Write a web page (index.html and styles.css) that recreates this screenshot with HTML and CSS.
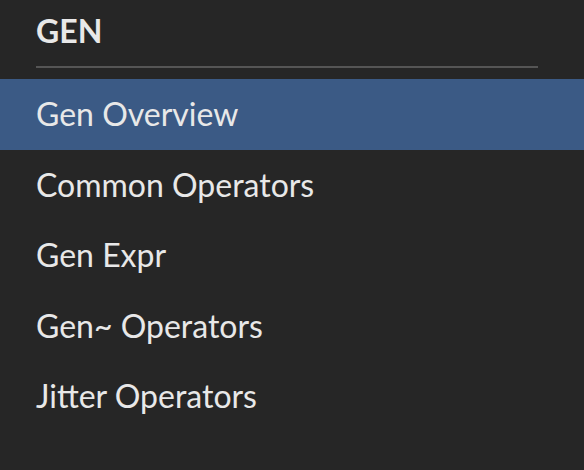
FILE: index.html
```html
<!DOCTYPE html>
<html>
<head>
<meta charset="utf-8">
<link rel="stylesheet" href="styles.css">
</head>
<body>
<nav class="sidebar">
  <div class="section-head">
    <h2 class="section-title">GEN</h2>
  </div>
  <ul class="menu">
    <li class="menu-item active">Gen Overview</li>
    <li class="menu-item">Common Operators</li>
    <li class="menu-item">Gen Expr</li>
    <li class="menu-item">Gen~ Operators</li>
    <li class="menu-item">Jitter Operators</li>
  </ul>
</nav>
</body>
</html>
```
FILE: styles.css
```css
html, body {
  margin: 0;
  padding: 0;
  background: #262626;
}
body {
  width: 584px;
  height: 470px;
  overflow: hidden;
  font-family: Lato, "Noto Sans", sans-serif;
  color: #e8e8e8;
}
.sidebar {
  display: flex;
  flex-direction: column;
}
.section-head {
  margin: 0 46px 0 36px;
  border-bottom: 2px solid #555555;
  padding-top: 11px;
  height: 68px;
  box-sizing: border-box;
}
.section-title {
  margin: 0;
  font-size: 32px;
  font-weight: 700;
  line-height: 40px;
  color: #e8e8e8;
}
.menu {
  list-style: none;
  margin: 11px 0 0 0;
  padding: 0;
}
.menu-item {
  height: 70.5px;
  line-height: 70.5px;
  padding-left: 36px;
  font-size: 32px;
  font-weight: 400;
}
.menu-item.active {
  background: #3b5a85;
}
```
